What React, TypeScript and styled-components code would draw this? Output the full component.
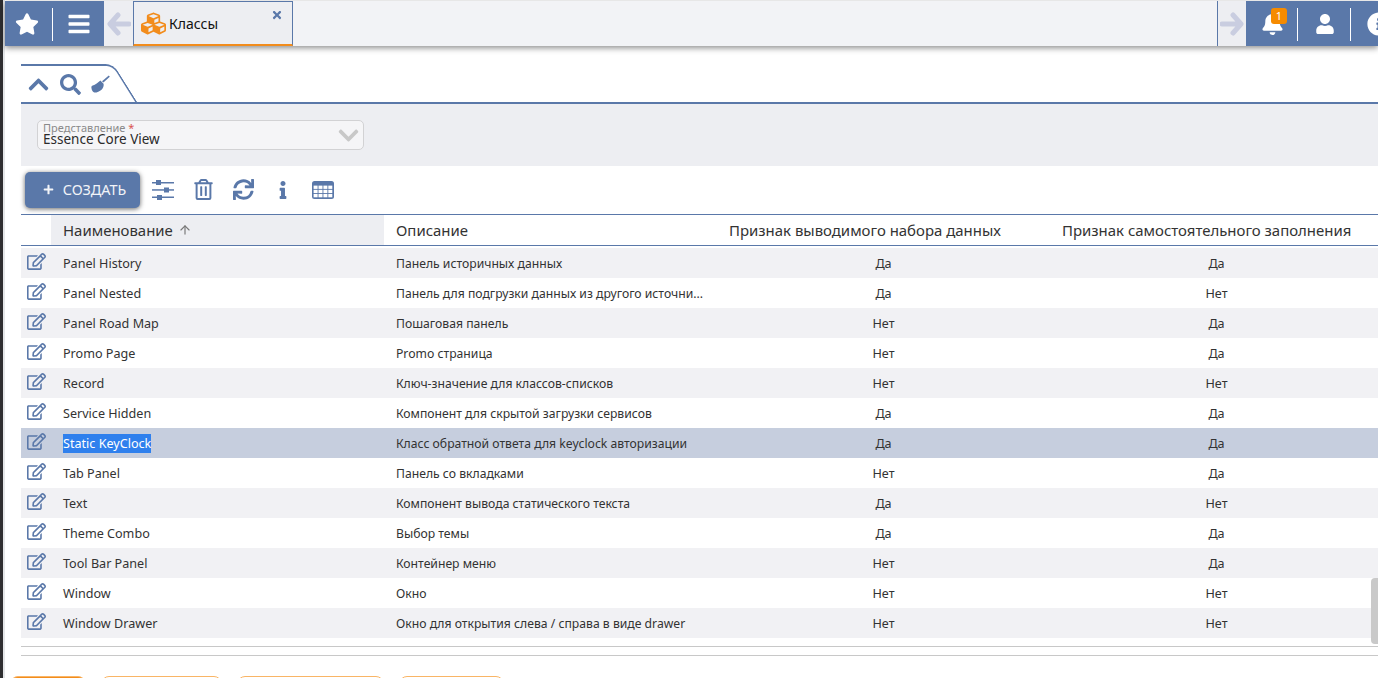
import styled, { createGlobalStyle } from 'styled-components';
import {
  FaStar,
  FaBars,
  FaBell,
  FaUser,
  FaInfoCircle,
  FaCubes,
  FaTimes,
  FaChevronUp,
  FaChevronDown,
  FaSearch,
  FaPlus,
  FaRegTrashAlt,
  FaSync,
  FaInfo,
  FaRegEdit,
} from 'react-icons/fa';
import { FiArrowUp } from 'react-icons/fi';

const BLUE = '#5a78a9';
const PANEL = '#edeef2';

const GlobalStyle = createGlobalStyle`
  html, body {
    margin: 0;
    padding: 0;
    height: 100%;
    overflow: hidden;
    background: #fff;
  }
  body {
    font-family: "Noto Sans", "Open Sans", sans-serif;
    color: #2b2b2b;
  }
`;

const Page = styled.div`
  display: flex;
  width: 1378px;
  height: 678px;
  overflow: hidden;
`;

const DesktopEdge = styled.div`
  flex: 0 0 5px;
  box-sizing: border-box;
  background: #e4e6e8;
  border-left: 3px solid #2e2e30;
`;

const Main = styled.div`
  flex: 1;
  min-width: 0;
  display: flex;
  flex-direction: column;
  position: relative;
`;

const TopBar = styled.header`
  flex: 0 0 45px;
  margin-top: 1px;
  display: flex;
  background: #f2f3f6;
  box-shadow: 0 2px 6px rgba(0, 0, 0, 0.45);
  overflow: hidden;
  position: relative;
  z-index: 2;
`;

const BarCell = styled.div<{ $w: number; $divider?: boolean; $pad?: number }>`
  flex: 0 0 ${(p) => p.$w}px;
  min-width: 0;
  box-sizing: border-box;
  display: flex;
  align-items: center;
  justify-content: center;
  padding-right: ${(p) => p.$pad ?? 0}px;
  background: ${BLUE};
  color: #fff;
  position: relative;

  ${(p) =>
    p.$divider &&
    `&::after {
      content: '';
      position: absolute;
      right: 0;
      top: 7px;
      bottom: 5px;
      width: 1px;
      background: #fff;
    }`}
`;

const InfoCell = styled.div`
  flex: 0 0 27px;
  min-width: 0;
  box-sizing: border-box;
  display: flex;
  align-items: center;
  padding-left: 16px;
  background: ${BLUE};
  color: #fff;

  & svg {
    flex-shrink: 0;
  }
`;

const ArrowCell = styled.div<{ $right?: boolean }>`
  flex: 0 0 29px;
  box-sizing: border-box;
  display: flex;
  align-items: center;
  justify-content: center;
  background: ${PANEL};
  color: #c9cde0;
  ${(p) => p.$right && `border-left: 1px solid ${BLUE};`}
`;

const OpenTab = styled.div`
  flex: 0 0 160px;
  box-sizing: border-box;
  display: flex;
  align-items: center;
  padding: 0 0 0 7px;
  gap: 3px;
  background: ${PANEL};
  border: 1px solid ${BLUE};
  border-bottom: 2px solid #f28c1c;
  font-size: 14px;
  color: #111;
  position: relative;
`;

const TabClose = styled.span`
  position: absolute;
  top: 7px;
  right: 9px;
  display: flex;
  color: ${BLUE};
`;

const Spacer = styled.div`
  flex: 1;
`;

const Badge = styled.span`
  position: absolute;
  top: 7px;
  left: 25px;
  width: 16px;
  height: 16px;
  border-radius: 3px;
  background: #f68b00;
  color: #fff;
  font-size: 11px;
  line-height: 16px;
  text-align: center;
`;

const Content = styled.div`
  flex: 1;
  min-height: 0;
  display: flex;
  flex-direction: column;
  padding: 18px 0 0 16px;
`;

const SearchTabRow = styled.div`
  flex: 0 0 40px;
  box-sizing: border-box;
  border-bottom: 2px solid ${BLUE};
  display: flex;
`;

const SearchTab = styled.div`
  width: 119px;
  height: 38px;
  display: flex;
  align-items: center;
  gap: 10px;
  padding: 3px 0 0 6px;
  box-sizing: border-box;
  position: relative;
  overflow: hidden;
  color: ${BLUE};

  &::before {
    content: '';
    position: absolute;
    left: -40px;
    right: 14px;
    top: 0;
    bottom: -2px;
    border-top: 2px solid ${BLUE};
    border-right: 2px solid ${BLUE};
    border-top-right-radius: 8px;
    transform: skewX(32deg);
  }
`;

const FilterPanel = styled.div`
  flex: 0 0 62px;
  box-sizing: border-box;
  background: ${PANEL};
  padding: 16px 0 0 16px;
`;

const ComboField = styled.div`
  width: 327px;
  height: 30px;
  box-sizing: border-box;
  border: 1px solid #d2d2d4;
  border-radius: 5px;
  background: #f5f5f7;
  padding: 1px 0 0 5px;
  position: relative;
`;

const ComboLabel = styled.div`
  font-size: 11px;
  line-height: 11px;
  color: #8a8a8a;

  & b {
    color: #d9534f;
    font-weight: 400;
  }
`;

const ComboValue = styled.div`
  font-size: 13.5px;
  line-height: 13px;
  color: #2b2b2b;
`;

const ComboArrow = styled.span`
  position: absolute;
  right: 3px;
  top: 3px;
  display: flex;
  color: #c8c8c8;
`;

const ActionBar = styled.div`
  flex: 0 0 49px;
  box-sizing: border-box;
  display: flex;
  align-items: center;
  padding: 0 0 1px 4px;
  border-bottom: 1px solid ${BLUE};
  color: ${BLUE};
`;

const CreateButton = styled.button`
  width: 115px;
  height: 36px;
  margin-right: 3px;
  padding: 0 0 0 4px;
  display: flex;
  align-items: center;
  justify-content: center;
  gap: 9px;
  border: none;
  border-radius: 5px;
  background: ${BLUE};
  color: #f2f4f8;
  font-family: inherit;
  font-size: 14.4px;
  box-shadow: 0 1px 5px rgba(0, 0, 0, 0.6);
`;

const ToolIcon = styled.span`
  flex: 0 0 40px;
  display: flex;
  justify-content: center;
  color: ${BLUE};
`;

const Table = styled.div`
  flex: 0 0 auto;
  display: flex;
  flex-direction: column;
  overflow: hidden;
`;

const HeadRow = styled.div`
  flex: 0 0 31px;
  box-sizing: border-box;
  margin-bottom: 2px;
  display: grid;
  grid-template-columns: 30px 333px 333px 333px 333px;
  border-bottom: 1px solid ${BLUE};
  font-size: 14.95px;
  line-height: 30px;
  color: #2b2b2b;
`;

const HeadCell = styled.div<{ $sorted?: boolean }>`
  display: flex;
  align-items: center;
  gap: 5px;
  padding-left: 12px;
  white-space: nowrap;
  background: ${(p) => (p.$sorted ? PANEL : 'transparent')};
  color: #333;
`;

const SortIcon = styled.span`
  display: flex;
  color: #777;
`;

const Row = styled.div<{ $striped: boolean; $selected: boolean }>`
  flex: 0 0 30px;
  display: grid;
  grid-template-columns: 30px 333px 333px 333px 333px;
  align-items: center;
  font-size: 12.6px;
  color: #333;
  background: ${(p) => (p.$selected ? '#c6cede' : p.$striped ? '#f1f1f4' : '#fff')};
`;

const EditCell = styled.div`
  display: flex;
  justify-content: center;
  padding: 0 0 3px 0;
  color: ${BLUE};
`;

const Cell = styled.div<{ $center?: boolean; $narrow?: boolean }>`
  padding-left: ${(p) => (p.$center ? 0 : 12)}px;
  text-align: ${(p) => (p.$center ? 'center' : 'left')};
  font-size: ${(p) => (p.$narrow ? '12.2px' : 'inherit')};
  white-space: nowrap;
  overflow: hidden;
`;

const Selected = styled.span`
  display: inline-block;
  line-height: 19px;
  background: #2f80ed;
  color: #fff;
`;

const Rule = styled.div`
  flex: 0 0 1px;
  margin-top: 8px;
  background: #c8c8c8;
`;

const FooterButtons = styled.div`
  margin: 20px 0 0 -11px;
  display: flex;
  gap: 15px;
`;

const FooterButton = styled.div<{ $w: number; $solid?: boolean }>`
  width: ${(p) => p.$w}px;
  height: 20px;
  box-sizing: border-box;
  border: 1px solid #f9b566;
  border-radius: 8px 8px 0 0;
  background: ${(p) => (p.$solid ? '#f28c1c' : '#fff')};
`;

const ScrollThumb = styled.div`
  position: absolute;
  right: 0;
  top: 578px;
  width: 7px;
  height: 66px;
  border-radius: 4px 0 0 4px;
  background: #c9c9c9;
`;

const NavArrow = ({ right }: { right?: boolean }) => (
  <svg width="24" height="24" viewBox="0 0 24 24" style={right ? { transform: 'scaleX(-1)' } : undefined}>
    <path
      d="M11 3 L3 12 L11 21 M3.5 12 H22"
      fill="none"
      stroke="currentColor"
      strokeWidth="5"
      strokeLinecap="round"
      strokeLinejoin="round"
    />
  </svg>
);

const BrushIcon = () => (
  <svg width="19" height="19" viewBox="0 0 19 19" fill="currentColor">
    <path d="M17.8 .6 L18.8 1.8 L12.4 7.6 L11 6.2 Z" />
    <path d="M9.4 5.4 L12.6 8.8 C13 11 12.2 13 10.8 14.4 C8.6 16.4 5.4 17.8 3.4 17.6 C2 17.4 .6 15 .4 12.8 C.2 11.6 .8 11 1.8 10.6 C4.4 9.6 7 7.6 9.4 5.4 Z" />
  </svg>
);

const SlidersIcon = () => (
  <svg width="22" height="20" viewBox="0 0 22 20" fill="currentColor">
    <rect x="0" y="2" width="22" height="1.5" />
    <rect x="0" y="9.2" width="22" height="1.5" />
    <rect x="0" y="16.5" width="22" height="1.5" />
    <rect x="4" y="0" width="5" height="5" />
    <rect x="12" y="7.5" width="5" height="5" />
    <rect x="5" y="15" width="5" height="5" />
  </svg>
);

const GridIcon = () => (
  <svg width="22" height="18" viewBox="0 0 22 18">
    <rect width="22" height="18" rx="2.5" fill="currentColor" />
    {[0, 1, 2].map((r) =>
      [0, 1, 2, 3].map((c) => (
        <rect key={`${r}-${c}`} x={1.6 + c * 4.9} y={4.6 + r * 4.2} width="4" height="3.3" fill="#fff" />
      )),
    )}
  </svg>
);

const rows = [
  ['Panel History', 'Панель историчных данных', 'Да', 'Да'],
  ['Panel Nested', 'Панель для подгрузки данных из другого источни...', 'Да', 'Нет'],
  ['Panel Road Map', 'Пошаговая панель', 'Нет', 'Да'],
  ['Promo Page', 'Promo страница', 'Нет', 'Да'],
  ['Record', 'Ключ-значение для классов-списков', 'Нет', 'Нет'],
  ['Service Hidden', 'Компонент для скрытой загрузки сервисов', 'Да', 'Да'],
  ['Static KeyClock', 'Класс обратной ответа для keyclock авторизации', 'Да', 'Да'],
  ['Tab Panel', 'Панель со вкладками', 'Нет', 'Да'],
  ['Text', 'Компонент вывода статического текста', 'Да', 'Нет'],
  ['Theme Combo', 'Выбор темы', 'Да', 'Да'],
  ['Tool Bar Panel', 'Контейнер меню', 'Нет', 'Да'],
  ['Window', 'Окно', 'Нет', 'Нет'],
  ['Window Drawer', 'Окно для открытия слева / справа в виде drawer', 'Нет', 'Нет'],
];

export default function App() {
  return (
    <>
      <GlobalStyle />
      <Page>
        <DesktopEdge />
        <Main>
          <TopBar>
            <BarCell $w={48} $divider $pad={5}>
              <FaStar size={24} />
            </BarCell>
            <BarCell $w={51}>
              <FaBars size={24} />
            </BarCell>
            <ArrowCell>
              <NavArrow />
            </ArrowCell>
            <OpenTab>
              <FaCubes size={25} color="#f28c1c" />
              Классы
              <TabClose>
                <FaTimes size={12} />
              </TabClose>
            </OpenTab>
            <Spacer />
            <ArrowCell $right>
              <NavArrow right />
            </ArrowCell>
            <BarCell $w={52} $divider>
              <FaBell size={23} />
              <Badge>1</Badge>
            </BarCell>
            <BarCell $w={53} $divider>
              <FaUser size={20} />
            </BarCell>
            <InfoCell>
              <FaInfoCircle size={24} />
            </InfoCell>
          </TopBar>
          <Content>
            <SearchTabRow>
              <SearchTab>
                <FaChevronUp size={23} />
                <FaSearch size={21} />
                <BrushIcon />
              </SearchTab>
            </SearchTabRow>
            <FilterPanel>
              <ComboField>
                <ComboLabel>
                  Представление <b>*</b>
                </ComboLabel>
                <ComboValue>Essence Core View</ComboValue>
                <ComboArrow>
                  <FaChevronDown size={23} />
                </ComboArrow>
              </ComboField>
            </FilterPanel>
            <ActionBar>
              <CreateButton>
                <FaPlus size={11} />
                СОЗДАТЬ
              </CreateButton>
              <ToolIcon>
                <SlidersIcon />
              </ToolIcon>
              <ToolIcon>
                <FaRegTrashAlt size={21} />
              </ToolIcon>
              <ToolIcon>
                <FaSync size={21} />
              </ToolIcon>
              <ToolIcon>
                <FaInfo size={18} />
              </ToolIcon>
              <ToolIcon>
                <GridIcon />
              </ToolIcon>
            </ActionBar>
            <Table>
              <HeadRow>
                <div />
                <HeadCell $sorted>
                  Наименование
                  <SortIcon>
                    <FiArrowUp size={14} />
                  </SortIcon>
                </HeadCell>
                <HeadCell>Описание</HeadCell>
                <HeadCell>Признак выводимого набора данных</HeadCell>
                <HeadCell>Признак самостоятельного заполнения</HeadCell>
              </HeadRow>
              {rows.map(([name, description, output, selfFill], i) => {
                const selected = name === 'Static KeyClock';
                return (
                  <Row key={name} $striped={i % 2 === 0} $selected={selected}>
                    <EditCell>
                      <FaRegEdit size={19} />
                    </EditCell>
                    <Cell>{selected ? <Selected>{name}</Selected> : name}</Cell>
                    <Cell $narrow>{description}</Cell>
                    <Cell $center>{output}</Cell>
                    <Cell $center>{selfFill}</Cell>
                  </Row>
                );
              })}
            </Table>
            <Rule />
            <Rule />
            <FooterButtons>
              <FooterButton $w={76} $solid />
              <FooterButton $w={121} />
              <FooterButton $w={147} />
              <FooterButton $w={105} />
            </FooterButtons>
          </Content>
          <ScrollThumb />
        </Main>
      </Page>
    </>
  );
}
